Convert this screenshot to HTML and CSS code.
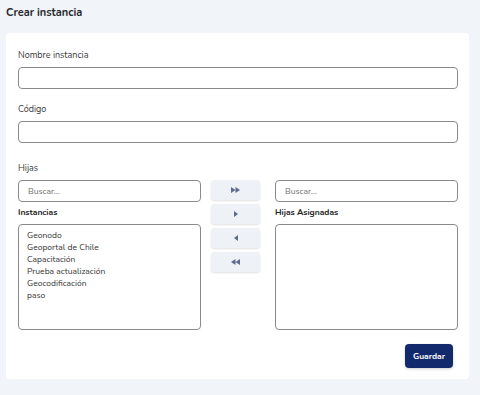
FILE: index.html
```html
<!DOCTYPE html>
<html lang="es">
<head>
<meta charset="utf-8">
<title>Crear instancia</title>
<link rel="stylesheet" href="styles.css">
</head>
<body>
<h1 class="title">Crear instancia</h1>
<div class="card">
  <label class="label">Nombre instancia</label>
  <div class="input"></div>
  <label class="label mt">Código</label>
  <div class="input"></div>
  <label class="label mt-hijas">Hijas</label>
  <div class="picker">
    <div class="col">
      <div class="input search">Buscar...</div>
      <div class="sub">Instancias</div>
      <div class="list">
        <div>Geonodo</div>
        <div>Geoportal de Chile</div>
        <div>Capacitación</div>
        <div>Prueba actualización</div>
        <div>Geocodificación</div>
        <div>paso</div>
      </div>
    </div>
    <div class="btns">
      <div class="mv"><svg width="9" height="6" viewBox="0 0 9 6"><path d="M0 0L4.5 3L0 6Z M4.5 0L9 3L4.5 6Z" fill="#5b6d8e"/></svg></div>
      <div class="mv"><svg width="4" height="6" viewBox="0 0 4 6"><path d="M0 0L4 3L0 6Z" fill="#5b6d8e"/></svg></div>
      <div class="mv"><svg width="4" height="6" viewBox="0 0 4 6"><path d="M4 0L0 3L4 6Z" fill="#5b6d8e"/></svg></div>
      <div class="mv"><svg width="9" height="6" viewBox="0 0 9 6"><path d="M4.5 0L0 3L4.5 6Z M9 0L4.5 3L9 6Z" fill="#5b6d8e"/></svg></div>
    </div>
    <div class="col">
      <div class="input search">Buscar...</div>
      <div class="sub">Hijas Asignadas</div>
      <div class="list"></div>
    </div>
  </div>
  <div class="actions"><button class="save">Guardar</button></div>
</div>
</body>
</html>
```
FILE: styles.css
```css
* { box-sizing: border-box; }
html, body { margin: 0; }
body {
  background: #f1f4f8;
  font-family: "Nunito", "Lato", "Noto Sans", sans-serif;
  color: #2b2b2b;
  padding: 4px 11px 16px 6px;
  width: 480px;
}
.title {
  margin: 0;
  font-size: 11px;
  font-weight: 700;
  line-height: 18px;
  color: #26292e;
  height: 29px;
}
.card {
  background: #fff;
  border-radius: 4px;
  padding: 16px 11px 11px 12px;
  display: flex;
  flex-direction: column;
}
.label {
  display: block;
  font-size: 9px;
  line-height: 12px;
  color: #3a3a3a;
  margin-bottom: 6px;
}
.mt { margin-top: 14px; }
.mt-hijas { margin-top: 19px; }
.input {
  height: 22px;
  border: 1px solid #8a8a8a;
  border-radius: 4px;
  background: #fff;
}
.search {
  font-size: 8.5px;
  color: #6d6d6d;
  padding: 0 9px;
  line-height: 20px;
}
.picker {
  display: flex;
}
.col {
  width: 183px;
  display: flex;
  flex-direction: column;
}
.sub {
  font-size: 8.5px;
  font-weight: 700;
  line-height: 12px;
  margin: 4px 0 6px;
  color: #222;
}
.list {
  height: 106px;
  border: 1px solid #8a8a8a;
  border-radius: 4px;
  padding: 4px 8px;
  font-size: 8.5px;
  line-height: 12px;
  color: #333;
}
.btns {
  width: 49px;
  margin: 0 15px 0 10px;
  display: flex;
  flex-direction: column;
  gap: 4px;
}
.mv {
  height: 20px;
  background: #eef1f6;
  border-radius: 3px;
  box-shadow: 0 1px 2px rgba(0,0,0,0.12);
  display: flex;
  align-items: center;
  justify-content: center;
}
.actions {
  display: flex;
  justify-content: flex-end;
  margin-top: 14px;
  padding-right: 5px;
}
.save {
  width: 48px;
  height: 24px;
  border: none;
  border-radius: 4px;
  background: #122a6b;
  color: #fff;
  font-family: inherit;
  font-weight: 700;
  font-size: 8.5px;
  padding: 0;
  box-shadow: 0 1px 3px rgba(0,0,0,0.2);
}
```
